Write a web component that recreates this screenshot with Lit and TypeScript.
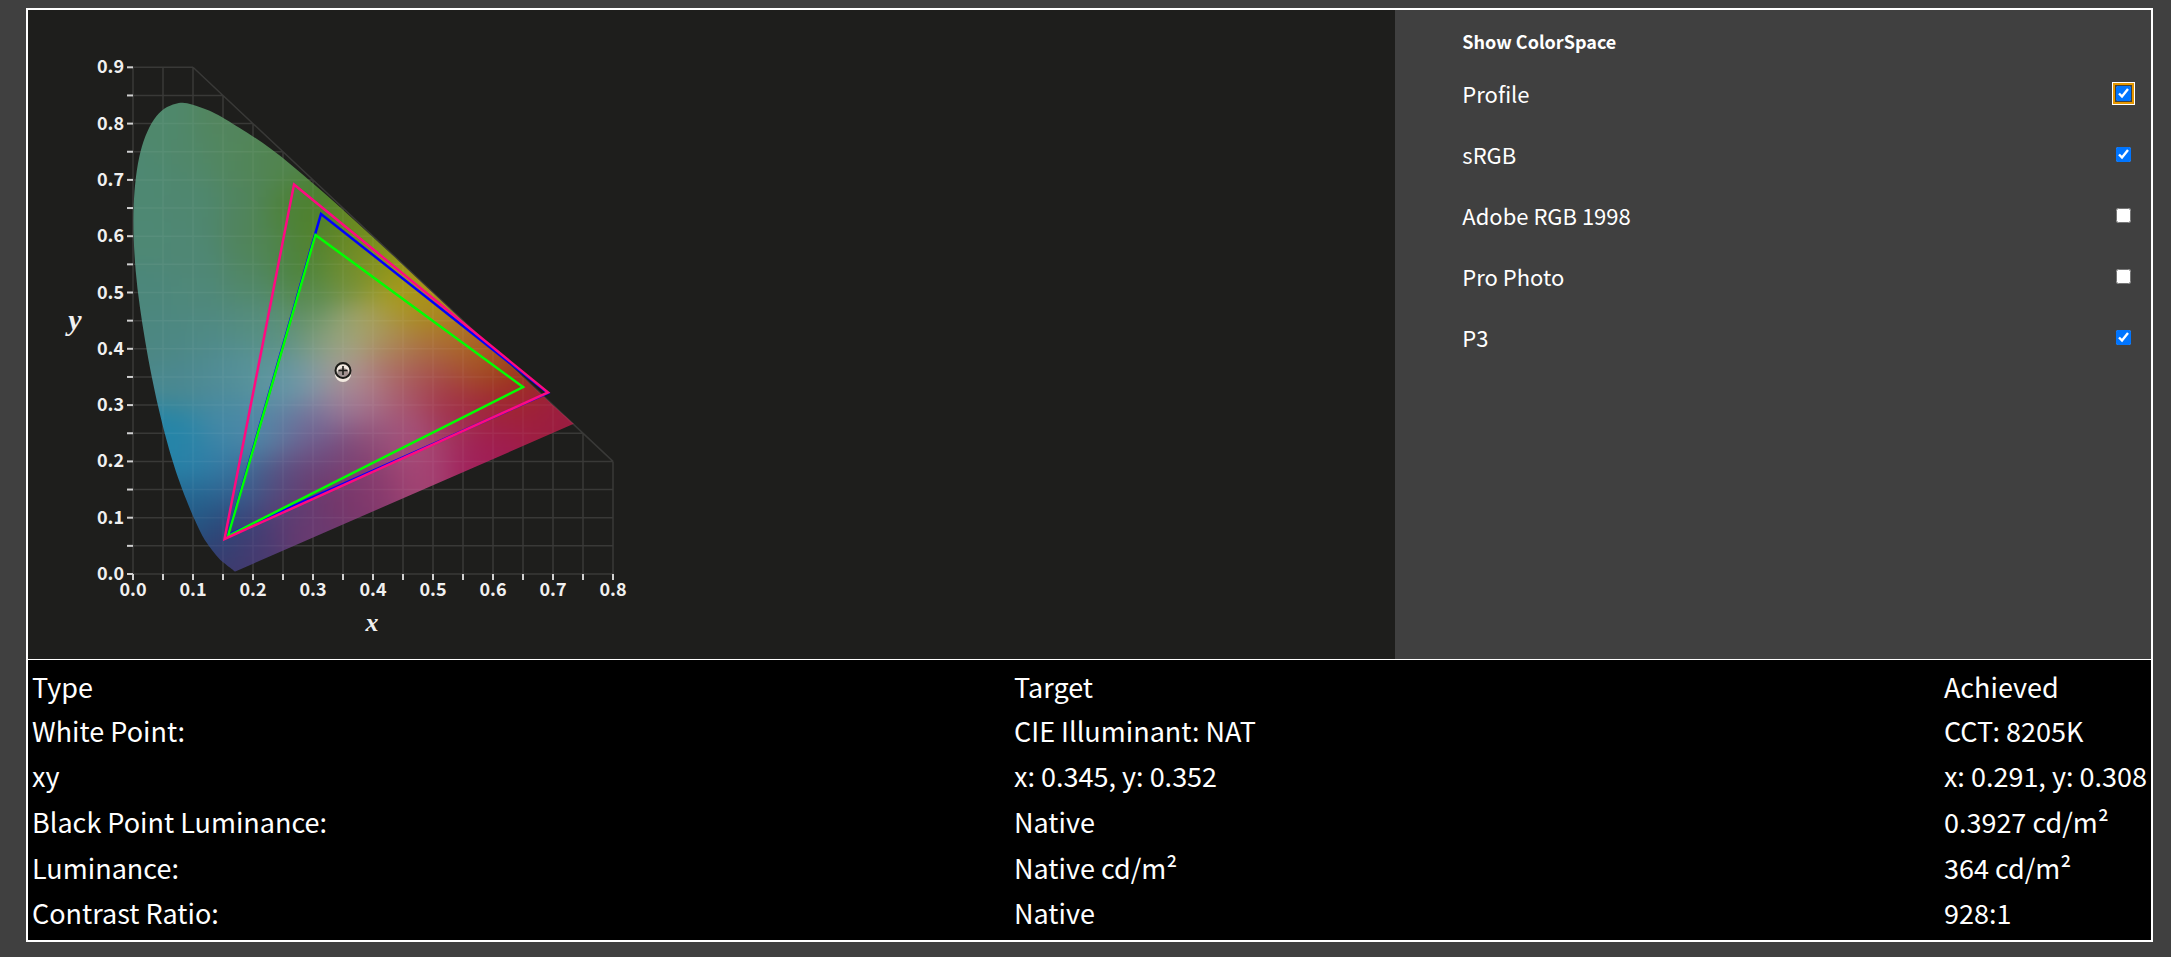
import { LitElement, html, svg, css } from "lit";
import { customElement, state } from "lit/decorators.js";

type Point = [number, number];

/* Spectral locus of the standard observer, violet to deep red. */
const LOCUS: Point[] = [
  [0.1715, 0.005], [0.169, 0.0051], [0.162, 0.0109], [0.154, 0.0177],
  [0.1415, 0.0297], [0.1215, 0.0578], [0.107, 0.0868], [0.0885, 0.1327],
  [0.066, 0.2007], [0.0425, 0.295], [0.0205, 0.4127], [0.0045, 0.5384],
  [0.0012, 0.6548], [0.0125, 0.7502], [0.0389, 0.813], [0.0763, 0.8365],
  [0.1142, 0.8282], [0.1547, 0.8075], [0.2296, 0.7553], [0.3016, 0.6923],
  [0.3731, 0.6245], [0.4441, 0.5547], [0.5125, 0.4866], [0.5752, 0.4242],
  [0.627, 0.3725], [0.6915, 0.3083], [0.7347, 0.2668],
];

/* Colour of the diagram at scattered chromaticities. */
const SAMPLES: [number, number, string][] = [
  [0.05, 0.8, "4f886c"], [0.15, 0.8, "52855d"], [0.23, 0.73, "51844f"],
  [0.29, 0.63, "4b802c"], [0.26, 0.65, "4e8238"], [0.02, 0.7, "4e8872"],
  [0.02, 0.6, "4e8874"], [0.1, 0.74, "50876a"], [0.02, 0.5, "4c877b"],
  [0.1, 0.66, "4f8770"], [0.1, 0.57, "4f8774"], [0.19, 0.6, "508460"],
  [0.19, 0.67, "508460"], [0.17, 0.74, "52865c"], [0.2, 0.52, "518768"],
  [0.05, 0.42, "4c8782"], [0.23, 0.59, "50854e"],
  [0.11, 0.49, "4f887a"], [0.12, 0.42, "4f8a86"], [0.2, 0.44, "558d80"],
  [0.2, 0.36, "589499"], [0.15, 0.35, "518c98"], [0.08, 0.34, "4b8890"],
  [0.15, 0.27, "468aa4"], [0.07, 0.25, "2385a8"], [0.1, 0.2, "2882a8"],
  [0.1, 0.12, "22658f"], [0.13, 0.09, "264e7c"], [0.15, 0.05, "2c3f70"],
  [0.17, 0.01, "403a6e"], [0.2, 0.05, "50396f"], [0.3, 0.08, "6a3a70"],
  [0.25, 0.11, "5a3b70"], [0.15, 0.15, "2f6b98"], [0.15, 0.21, "3a80a8"],
  [0.35, 0.13, "76366a"], [0.3, 0.17, "6b3a6d"], [0.4, 0.15, "873a6d"],
  [0.47, 0.17, "a04372"], [0.49, 0.21, "a84575"], [0.56, 0.2, "a01f5a"],
  [0.61, 0.23, "9f1c50"], [0.7, 0.27, "9b1d40"], [0.65, 0.3, "a0203a"],
  [0.6, 0.29, "a0253c"], [0.53, 0.31, "a12c3e"], [0.46, 0.25, "a45680"],
  [0.53, 0.26, "a03558"], [0.4, 0.24, "8d4a75"], [0.4, 0.3, "a8708c"],
  [0.46, 0.31, "a85068"], [0.38, 0.34, "b28890"], [0.35, 0.36, "aea295"],
  [0.35, 0.42, "a0a87c"], [0.4, 0.44, "a5a262"], [0.35, 0.3, "94789a"],
  [0.45, 0.49, "a99f1a"], [0.49, 0.46, "a9871c"], [0.42, 0.55, "8e9418"],
  [0.38, 0.6, "738c1c"], [0.33, 0.6, "5b842a"], [0.36, 0.53, "708f38"],
  [0.28, 0.55, "4c8338"], [0.29, 0.48, "588b52"], [0.25, 0.42, "5a9182"],
  [0.31, 0.42, "7a9a78"], [0.25, 0.34, "6096a6"], [0.3, 0.35, "7c9aaa"],
  [0.2, 0.25, "4e8aa8"], [0.25, 0.25, "5e7ca2"], [0.3, 0.26, "77709a"],
  [0.3, 0.22, "6c5186"], [0.2, 0.16, "3f5f8c"], [0.25, 0.17, "5a4d80"],
  [0.35, 0.21, "7b4274"], [0.5, 0.4, "a96b42"], [0.5, 0.35, "a65050"],
  [0.55, 0.42, "ae7620"], [0.6, 0.38, "a5571d"], [0.56, 0.37, "a5502f"],
  [0.63, 0.34, "9a3315"], [0.5, 0.5, "a99016"], [0.18, 0.09, "35427a"],
  [0.44, 0.41, "ad8454"], [0.43, 0.35, "ab6a60"],
];

const ORIGIN: Point = [133, 574];
const UNIT: Point = [600, 563];
const CELL = 8;
const SPREAD = 2 * 0.032 ** 2;

const px = (x: number) => ORIGIN[0] + x * UNIT[0];
const py = (y: number) => ORIGIN[1] - y * UNIT[1];

const rgb = (hex: string) => [0, 2, 4].map((i) => parseInt(hex.slice(i, i + 2), 16));
const PALETTE = SAMPLES.map(([x, y, hex]) => ({ x, y, c: rgb(hex) }));

function colourAt(x: number, y: number): string {
  let sum = 0;
  const out = [0, 0, 0];
  for (const s of PALETTE) {
    const w = Math.exp(-((s.x - x) ** 2 + (s.y - y) ** 2) / SPREAD);
    sum += w;
    for (let i = 0; i < 3; i++) out[i] += s.c[i] * w;
  }
  return `rgb(${out.map((v) => Math.round(v / sum)).join(",")})`;
}

/* Smooth curve through the locus, closed by the straight line of purples. */
function locusPath(): string {
  const p = LOCUS.map(([x, y]): Point => [px(x), py(y)]);
  const f = (n: number) => n.toFixed(2);
  let d = `M${f(p[0][0])} ${f(p[0][1])}`;
  for (let i = 0; i < p.length - 1; i++) {
    const a = p[Math.max(i - 1, 0)];
    const b = p[i];
    const c = p[i + 1];
    const e = p[Math.min(i + 2, p.length - 1)];
    d += `C${f(b[0] + (c[0] - a[0]) / 6)} ${f(b[1] + (c[1] - a[1]) / 6)} ` +
      `${f(c[0] - (e[0] - b[0]) / 6)} ${f(c[1] - (e[1] - b[1]) / 6)} ${f(c[0])} ${f(c[1])}`;
  }
  return d + "Z";
}

const LOCUS_PATH = locusPath();

const CELLS = (() => {
  const cells = [];
  for (let x = px(-0.03); x < px(0.77); x += CELL) {
    for (let y = py(0.87); y < py(-0.03); y += CELL) {
      const cx = (x + CELL / 2 - ORIGIN[0]) / UNIT[0];
      const cy = (ORIGIN[1] - y - CELL / 2) / UNIT[1];
      if (cx + cy > 1.08 || cy < cx * 0.47 - 0.15) continue;
      cells.push(svg`<rect x=${x} y=${y} width=${CELL + 1} height=${CELL + 1} fill=${colourAt(cx, cy)} />`);
    }
  }
  return cells;
})();

const steps = (n: number) => Array.from({ length: n + 1 }, (_, i) => i);

const GRID_PATH = [
  ...steps(16).map((i) => `M${px(i / 20)} ${py(0)}V${py(Math.min(0.9, 1 - i / 20))}`),
  ...steps(18).map((i) => `M${px(0)} ${py(i / 20)}H${px(Math.min(0.8, 1 - i / 20))}`),
  `M${px(0.1)} ${py(0.9)}L${px(0.8)} ${py(0.2)}`,
].join("");

interface Space {
  id: string;
  label: string;
  on: boolean;
  focus?: boolean;
  points: string;
}

@customElement("gamut-chart")
class GamutChart extends LitElement {
  static properties = { spaces: { attribute: false } };
  declare spaces: Space[];

  static styles = css`
    :host { display: block; }
    .chart { display: block; width: 660px; height: 649px; max-width: 100%; }
    .grid { stroke: #fff; stroke-opacity: 0.12; stroke-width: 1.5; fill: none; }
    .inner { stroke-opacity: 0.05; }
    .tick { stroke: #d0d0d0; stroke-width: 2; }
    .num { font: bold 18px "Noto Sans CJK SC", sans-serif; fill: #f0f0f0; }
    .end { text-anchor: end; }
    .mid { text-anchor: middle; }
    .axis { font: italic bold 30px "Liberation Serif", serif; fill: #f0f0f0; text-anchor: middle; }
    .small { font-size: 26px; }
    .tri { fill: none; stroke-width: 2.5; }
    .profile { stroke: #00f; }
    .srgb { stroke: #0f0; }
    .p3 { stroke: #ff0a80; }
    .adobe { stroke: #fff; }
    .prophoto { stroke: #ff0; }
    .halo { fill: none; stroke: #f2e9e0; stroke-width: 2; }
    .mark { fill: none; stroke: #1c1c18; stroke-width: 2; }
    .cross { stroke-width: 1.6; }
  `;

  render() {
    return html`
      <svg class="chart" viewBox="28 10 660 649" role="img" aria-label="CIE xy chromaticity diagram">
        <defs>
          <clipPath id="locus"><path d=${LOCUS_PATH} /></clipPath>
          <filter id="soften" x="-5%" y="-5%" width="110%" height="110%" color-interpolation-filters="sRGB">
            <feGaussianBlur stdDeviation="9" />
          </filter>
        </defs>
        <path class="grid" d=${GRID_PATH} />
        <g clip-path="url(#locus)">
          <g filter="url(#soften)">${CELLS}</g>
          <path class="grid inner" d=${GRID_PATH} />
        </g>
        ${steps(16).map((i) => svg`<path class="tick" d="M${px(i / 20)} 574v6" />`)}
        ${steps(18).map((i) => svg`<path class="tick" d="M133 ${py(i / 20)}h-6" />`)}
        ${steps(8).map((i) => svg`<text class="num mid" x=${px(i / 10)} y="596">${(i / 10).toFixed(1)}</text>`)}
        ${steps(9).map((i) => svg`<text class="num end" x="124" y=${py(i / 10) + 6}>${(i / 10).toFixed(1)}</text>`)}
        <text class="axis" x="75" y="330">y</text>
        <text class="axis small" x="372" y="631">x</text>
        ${this.spaces
          .filter((s) => s.on)
          .map((s) => svg`<polygon class="tri ${s.id}" points=${s.points} />`)}
        <circle class="halo" cx="343" cy="374" r="7" />
        <circle class="halo" cx="343" cy="372.500" r="7" />
        <circle class="mark" cx="343" cy="370.500" r="7.5" />
        <path class="mark cross" d="M338.500 370.500h9M343 366v9" />
      </svg>
    `;
  }
}

const ROWS = [
  ["White Point:", "CIE Illuminant: NAT", "CCT: 8205K"],
  ["xy", "x: 0.345, y: 0.352", "x: 0.291, y: 0.308"],
  ["Black Point Luminance:", "Native", "0.3927 cd/m²"],
  ["Luminance:", "Native cd/m²", "364 cd/m²"],
  ["Contrast Ratio:", "Native", "928:1"],
];

@customElement("app-root")
class AppRoot extends LitElement {
  @state() private spaces: Space[] = [
    { id: "profile", label: "Profile", on: true, focus: true, points: "321,214 548,393 228,535" },
    { id: "srgb", label: "sRGB", on: true, points: "315.5,235 523,387 228,536" },
    { id: "adobe", label: "Adobe RGB 1998", on: false, points: "259,174 517,388 223,540" },
    { id: "prophoto", label: "Pro Photo", on: false, points: "229,101 573,424 155,574" },
    { id: "p3", label: "P3", on: true, points: "294,184.5 548,392.5 224.5,539" },
  ];

  static styles = css`
    :host {
      display: grid;
      box-sizing: border-box;
      min-height: 100vh;
      padding: 8px 18px 15px 26px;
      background: #404040;
      color: #fff;
      font-family: "Noto Sans CJK SC", sans-serif;
    }
    .frame { border: 2px solid #fff; display: grid; grid-template-rows: 65fr 28fr; }
    .top { display: grid; grid-template-columns: 38fr 21fr; border-bottom: 1px solid #fff; }
    .plot { background: #1e1e1c; }
    .side { padding: 19px 20px 0 67px; }
    .title { margin: 0 0 24px; font-size: 18px; line-height: 24px; font-weight: bold; }
    .list { display: flex; flex-direction: column; gap: 29px; }
    .item { display: flex; align-items: center; justify-content: space-between; font-size: 22px; line-height: 32px; }
    .box { width: 15px; height: 15px; margin: 0; accent-color: #0075ff; border-radius: 3px; }
    .focus { outline: none; box-shadow: 0 0 0 1px #404040, 0 0 0 3px #e59700, 0 0 0 4px #fff; }
    .lower { background: #000; padding: 6px 1px 4px; display: grid; }
    .data { width: 100%; height: 100%; border-spacing: 0; font-size: 27px; line-height: 40px; }
    .data th, .data td { padding: 1px 3px; font-weight: normal; text-align: left; white-space: nowrap; }
    .data .first { width: 46.3%; }
    .data .last { width: 1%; }
  `;

  private toggle(id: string, on: boolean) {
    this.spaces = this.spaces.map((s) => (s.id === id ? { ...s, on } : s));
  }

  render() {
    return html`
      <main class="frame">
        <section class="top">
          <div class="plot"><gamut-chart .spaces=${this.spaces}></gamut-chart></div>
          <div class="side">
            <h2 class="title">Show ColorSpace</h2>
            <div class="list">
              ${this.spaces.map(
                (s) => html`
                  <div class="item">
                    <label for=${s.id}>${s.label}</label>
                    <input
                      class="box ${s.focus ? "focus" : ""}"
                      id=${s.id}
                      type="checkbox"
                      .checked=${s.on}
                      @change=${(e: Event) => this.toggle(s.id, (e.target as HTMLInputElement).checked)}
                    />
                  </div>
                `
              )}
            </div>
          </div>
        </section>
        <section class="lower">
          <table class="data">
            <thead>
              <tr><th class="first">Type</th><th>Target</th><th class="last">Achieved</th></tr>
            </thead>
            <tbody>
              ${ROWS.map((r) => html`<tr>${r.map((c) => html`<td>${c}</td>`)}</tr>`)}
            </tbody>
          </table>
        </section>
      </main>
    `;
  }
}
